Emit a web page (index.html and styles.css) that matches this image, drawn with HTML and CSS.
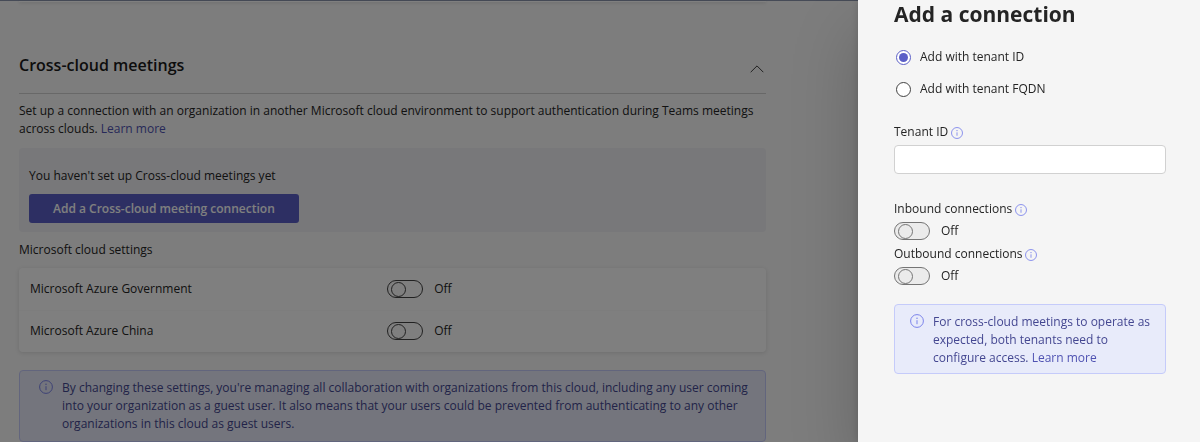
FILE: index.html
```html
<!DOCTYPE html>
<html lang="en">
<head>
    <meta charset="UTF-8">
    <meta name="viewport" content="width=device-width, initial-scale=1.0">
    <title>Cross-cloud meetings</title>
    <link rel="stylesheet" href="styles.css">
</head>
<body>
    <svg class="sprite" aria-hidden="true">
        <symbol id="info" viewBox="0 0 14 14">
            <circle cx="7" cy="7" r="6.4" fill="none" stroke="currentColor"/>
            <path d="M7 6.2v4" fill="none" stroke="currentColor"/>
            <circle cx="7" cy="4.2" r=".75" fill="currentColor"/>
        </symbol>
    </svg>

    <div class="layout">
        <main class="settings">
            <div class="previous-card"></div>
            <header class="section-header">
                <h2>Cross-cloud meetings</h2>
                <button class="collapse" type="button" aria-label="Collapse section">
                    <svg width="14" height="8" viewBox="0 0 14 8"><path d="M.7 7.2 7 .9l6.3 6.3" fill="none" stroke="currentColor"/></svg>
                </button>
            </header>
            <p class="intro">Set up a connection with an organization in another Microsoft cloud environment to support authentication during Teams meetings across clouds. <a href="#">Learn more</a></p>

            <div class="empty-state">
                <p>You haven't set up Cross-cloud meetings yet</p>
                <button class="primary" type="button">Add a Cross-cloud meeting connection</button>
            </div>

            <h3>Microsoft cloud settings</h3>
            <div class="card">
                <div class="card-row">
                    <label for="azure-gov">Microsoft Azure Government</label>
                    <div class="switch"><input type="checkbox" id="azure-gov"><span>Off</span></div>
                </div>
                <div class="card-row">
                    <label for="azure-china">Microsoft Azure China</label>
                    <div class="switch"><input type="checkbox" id="azure-china"><span>Off</span></div>
                </div>
            </div>

            <div class="banner">
                <svg class="banner-icon"><use href="#info"/></svg>
                <p>By changing these settings, you're managing all collaboration with organizations from this cloud, including any user coming into your organization as a guest user. It also means that your users could be prevented from authenticating to any other organizations in this cloud as guest users.</p>
            </div>
        </main>

        <div class="backdrop"></div>

        <aside class="panel">
            <h1>Add a connection</h1>
            <div class="radio">
                <input type="radio" name="method" id="by-id" checked>
                <label for="by-id">Add with tenant ID</label>
            </div>
            <div class="radio">
                <input type="radio" name="method" id="by-fqdn">
                <label for="by-fqdn">Add with tenant FQDN</label>
            </div>

            <div class="field-label">
                <label for="tenant">Tenant ID</label>
                <svg class="hint"><use href="#info"/></svg>
            </div>
            <input class="text-box" type="text" id="tenant">

            <div class="field-label">
                <label for="inbound">Inbound connections</label>
                <svg class="hint"><use href="#info"/></svg>
            </div>
            <div class="switch muted"><input type="checkbox" id="inbound"><span>Off</span></div>
            <div class="field-label">
                <label for="outbound">Outbound connections</label>
                <svg class="hint"><use href="#info"/></svg>
            </div>
            <div class="switch muted"><input type="checkbox" id="outbound"><span>Off</span></div>

            <div class="banner">
                <svg class="banner-icon"><use href="#info"/></svg>
                <p>For cross-cloud meetings to operate as expected, both tenants need to configure access. <a href="#">Learn more</a></p>
            </div>
        </aside>
    </div>
</body>
</html>
```
FILE: styles.css
```css
* {
    box-sizing: border-box;
}
body {
    margin: 0;
    font-family: "Open Sans", "Noto Sans", sans-serif;
    font-size: 12px;
    line-height: 18px;
    color: #242424;
    background-color: #fafafa;
    overflow: hidden;
}
h1, h2, h3, p {
    margin: 0;
}
a {
    color: #4f52b2;
    text-decoration: none;
}
button, input {
    font: inherit;
    margin: 0;
}
.sprite {
    position: absolute;
    width: 0;
    height: 0;
}
.layout {
    display: flex;
    min-height: 100vh;
}

/* Settings page */
.settings {
    flex: 1;
    min-width: 0;
    padding: 0 92px 0 19px;
    border-top: 1px solid #8c96ae;
}
.previous-card {
    height: 1px;
    background-color: #fff;
    box-shadow: 0 1px 3px rgba(0, 0, 0, 0.2);
}
.section-header {
    display: flex;
    justify-content: space-between;
    align-items: center;
    padding: 51px 0 16px;
    border-bottom: 1px solid #d1d1d1;
}
h2 {
    font-size: 16px;
    line-height: 24px;
    font-weight: 600;
    color: #1a1a1a;
}
.collapse {
    display: flex;
    padding: 8px 2px 0;
    border: none;
    background: none;
    color: #424242;
}
.intro {
    padding: 8px 0 10px;
}
.empty-state {
    padding: 19px 10px 9px;
    border-radius: 4px;
    background-color: #f0f0f4;
}
.primary {
    display: block;
    margin-top: 9px;
    padding: 6px 24px 5px;
    border: none;
    border-radius: 3px;
    font-weight: 600;
    color: #fff;
    background-color: #5b5fc7;
}
h3 {
    padding: 9px 0;
    font-size: 12px;
    font-weight: 400;
}
.card {
    border-radius: 4px;
    background-color: #fff;
    box-shadow: 0 1px 4px rgba(0, 0, 0, 0.12);
}
.card-row {
    display: grid;
    grid-template-columns: 49% 1fr;
    column-gap: 2px;
    align-items: center;
    padding: 12px 11px;
}
.card-row + .card-row {
    padding-top: 11px;
    border-top: 1px solid #fafafa;
}

/* Switches */
.switch {
    display: flex;
    align-items: center;
    gap: 11px;
}
.switch input {
    appearance: none;
    display: flex;
    align-items: center;
    width: 36px;
    height: 18px;
    padding-left: 3px;
    border: 1px solid #424242;
    border-radius: 9px;
}
.switch input::before {
    content: "";
    width: 13px;
    height: 13px;
    border: 1px solid #424242;
    border-radius: 50%;
}
.switch.muted input {
    border-color: #757575;
    background-color: #ebebeb;
}
.switch.muted input::before {
    border-color: #757575;
}

.banner {
    display: flex;
    gap: 9px;
    margin-top: 18px;
    padding: 8px 6px 8px 19px;
    border: 1px solid #c5cbfa;
    border-radius: 4px;
    color: #444791;
    background-color: #e8ebfa;
}
.banner-icon {
    flex: none;
    width: 14px;
    height: 14px;
    margin-top: 1px;
    color: #7b83eb;
}

/* Page dimming */
.backdrop {
    position: fixed;
    inset: 0;
    background-color: rgba(0, 0, 0, 0.5);
}

/* Side panel */
.panel {
    position: relative;
    flex: none;
    width: 342px;
    padding: 0 34px 0 36px;
    background-color: #f5f5f5;
    box-shadow: 0 0 8px rgba(0, 0, 0, 0.14), 0 32px 64px rgba(0, 0, 0, 0.2);
}
h1 {
    padding: 0 0 20px;
    font-size: 21px;
    line-height: 28px;
    font-weight: 700;
}
.radio {
    display: flex;
    align-items: center;
    gap: 9px;
    margin-bottom: 14px;
    padding-left: 2px;
}
.radio input {
    appearance: none;
    display: grid;
    place-items: center;
    width: 15px;
    height: 15px;
    border: 1px solid #424242;
    border-radius: 50%;
    background-color: #fff;
}
.radio input:checked {
    border-color: #5b5fc7;
}
.radio input:checked::before {
    content: "";
    width: 9px;
    height: 9px;
    border-radius: 50%;
    background-color: #5b5fc7;
}
.field-label {
    display: flex;
    align-items: center;
    gap: 3px;
    margin: 5px 0 4px;
}
.radio + .field-label {
    margin-top: 25px;
}
.hint {
    width: 12px;
    height: 12px;
    margin-top: 1px;
    color: #7b83eb;
}
.text-box {
    display: block;
    width: 100%;
    height: 29px;
    margin-bottom: 26px;
    padding: 0 10px;
    border: 1px solid #d1d1d1;
    border-radius: 4px;
    background-color: #fff;
}
.panel .banner {
    margin-top: 19px;
    padding: 8px 12px 6px 15px;
}
```
